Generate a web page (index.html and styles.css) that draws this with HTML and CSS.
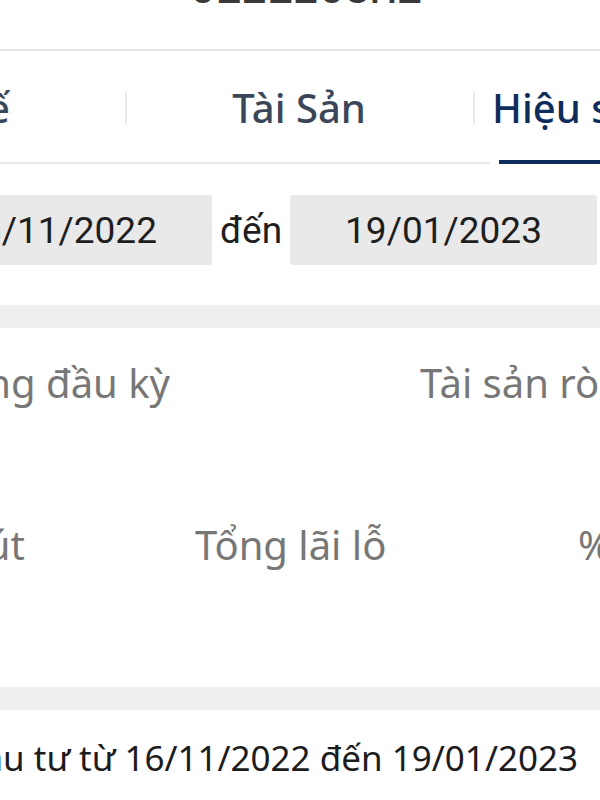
FILE: index.html
```html
<!DOCTYPE html>
<html lang="vi">
<head>
    <meta charset="UTF-8">
    <meta name="viewport" content="width=device-width, initial-scale=1.0">
    <title>Hiệu suất đầu tư</title>
    <link rel="stylesheet" href="styles.css">
</head>
<body>
    <div class="screen">
        <div class="account">
            <div class="account-id">0121205M1</div>
        </div>

        <nav class="tabs">
            <div class="tab tab-first">Báo cáo thuế</div>
            <div class="tab tab-middle">Tài Sản</div>
            <div class="tab tab-active">Hiệu suất</div>
        </nav>

        <div class="date-range">
            <div class="date-box">16/11/2022</div>
            <div class="date-sep">đến</div>
            <div class="date-box">19/01/2023</div>
        </div>

        <div class="band"></div>

        <div class="stats">
            <div class="stat-row stat-row-two">
                <div class="stat stat-clip">Tài sản ròng đầu kỳ</div>
                <div class="stat">Tài sản ròng cuối kỳ</div>
            </div>
            <div class="stat-row stat-row-three">
                <div class="stat stat-clip">Nạp/Rút</div>
                <div class="stat">Tổng lãi lỗ</div>
                <div class="stat">% lãi lỗ</div>
            </div>
        </div>

        <div class="band"></div>

        <div class="summary">
            <p>Hiệu quả đầu tư từ 16/11/2022 đến 19/01/2023</p>
        </div>
    </div>
</body>
</html>
```

FILE: styles.css
```css
body {
    margin: 0;
    background-color: #FFFFFF;
    font-family: 'Noto Sans', 'Open Sans', sans-serif;
    overflow: hidden;
}
.screen {
    width: 600px;
    height: 800px;
    overflow: hidden;
}
.account {
    height: 49px;
    border-bottom: 2px solid #E6E6E6;
    display: flex;
    justify-content: center;
}
.account-id {
    font-family: 'Liberation Mono', monospace;
    font-weight: bold;
    font-size: 43px;
    line-height: 43px;
    color: #3A3A3A;
    margin-top: -30px;
    margin-left: 12px;
}

/* tabs */
.tabs {
    display: grid;
    grid-template-columns: 125px 348px 1fr;
    height: 113px;
}
.tab {
    display: flex;
    align-items: center;
    white-space: nowrap;
    font-size: 40px;
    font-weight: 550;
    color: #3B4758;
    background: linear-gradient(#E8E8E8, #E8E8E8) left bottom / 100% 2px no-repeat;
}
.tab-first {
    justify-content: flex-end;
    padding-right: 115px;
}
.tab-middle {
    justify-content: center;
    background:
        linear-gradient(#EBEBEB, #EBEBEB) left center / 2px 32px no-repeat,
        linear-gradient(#E8E8E8, #E8E8E8) left bottom / 100% 2px no-repeat;
}
.tab-active {
    padding-left: 19px;
    color: #0E2D5C;
    background:
        linear-gradient(#EBEBEB, #EBEBEB) left center / 2px 32px no-repeat,
        linear-gradient(#E8E8E8, #E8E8E8) left bottom / 17px 2px no-repeat,
        linear-gradient(#0E2D5C, #0E2D5C) 26px bottom / 100% 4px no-repeat;
}

/* date range */
.date-range {
    display: flex;
    align-items: center;
    margin: 31px 0 0 -95px;
    height: 70px;
    font-family: Roboto, sans-serif;
    font-size: 37px;
    color: #1E1E1E;
}
.date-box {
    flex: 0 0 307px;
    height: 70px;
    display: flex;
    align-items: center;
    justify-content: center;
    background-color: #E9E9E9;
    border-radius: 3px;
}
.date-sep {
    flex: 0 0 78px;
    text-align: center;
}

.band {
    height: 23px;
    background-color: #EFEFEF;
}
.date-range + .band {
    margin-top: 40px;
}

/* stats */
.stats {
    height: 359px;
    padding-top: 30px;
    box-sizing: border-box;
}
.stat-row {
    display: grid;
    height: 162px;
    align-items: start;
}
.stat-row-two {
    grid-template-columns: 170px 250px 1fr;
}
.stat-row-two .stat:last-child {
    grid-column: 3;
}
.stat-row-three {
    grid-template-columns: 25px 170px 383px 1fr;
}
.stat-row-three .stat:nth-child(2) {
    grid-column: 3;
}
.stat-row-three .stat:nth-child(3) {
    grid-column: 4;
}
.stat {
    display: flex;
    white-space: nowrap;
    font-size: 40px;
    line-height: 50px;
    color: #777777;
}
.stat-clip {
    justify-content: flex-end;
}

/* summary */
.summary {
    display: flex;
    justify-content: flex-end;
    padding: 26px 22px 0 0;
}
.summary p {
    margin: 0;
    white-space: nowrap;
    font-size: 35px;
    line-height: 44px;
    color: #1C1C1C;
}
```
